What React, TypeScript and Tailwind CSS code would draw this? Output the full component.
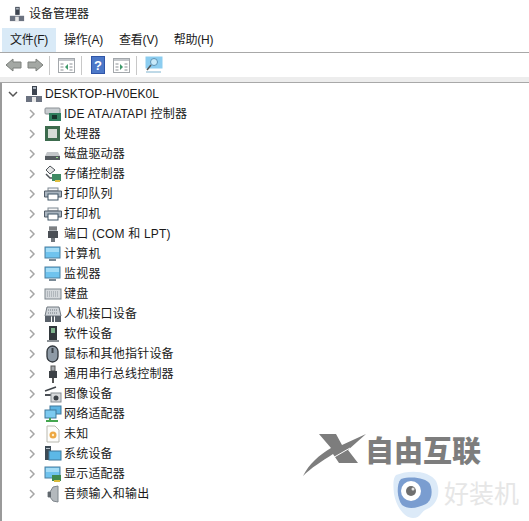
import React from 'react';

const font = { fontFamily: '"Liberation Sans", "Noto Sans CJK SC", sans-serif' };

function Chevron({ open }: { open?: boolean }) {
  return (
    <svg width="10" height="10" viewBox="0 0 10 10" className="shrink-0">
      <path d={open ? 'M1 3l4 4 4-4' : 'M3 1l4 4-4 4'} fill="none" stroke={open ? '#555' : '#a6a6a6'} strokeWidth="1.5" />
    </svg>
  );
}

function PcTree({ size = 18 }: { size?: number }) {
  return (
    <svg width={size} height={size} viewBox="0 0 18 18">
      <rect x="7" y="1" width="5" height="9" fill="#3d4450" />
      <rect x="8" y="2" width="3" height="2" fill="#a9b2bd" />
      <rect x="1" y="11" width="16" height="6" fill="#6b7280" />
      <rect x="7" y="12" width="4" height="5" fill="#e8e8e8" />
    </svg>
  );
}

function Screen({ stand = true }: { stand?: boolean }) {
  return (
    <>
      <rect x="1" y="2" width="15" height="11" fill="#6fc3ee" stroke="#4a7f9f" />
      <rect x="2" y="3" width="13" height="4" fill="#a4dcf6" />
      {stand && <path d="M5 15h7" stroke="#7a8a96" strokeWidth="2" />}
    </>
  );
}

function Printer() {
  return (
    <>
      <rect x="4" y="3" width="10" height="3" fill="#f6f6f6" stroke="#7d8791" />
      <path d="M0.5 6h17v6h-17z" fill="#a9b4bf" stroke="#4f5a66" />
      <rect x="4" y="9" width="10" height="6" fill="#fff" stroke="#3e5566" />
    </>
  );
}

const icons: Record<string, React.ReactNode> = {
  ide: (
    <>
      <rect x="1" y="3" width="15" height="6" rx="1" fill="#c8cdd0" stroke="#8a9094" />
      <rect x="5" y="8" width="12" height="8" fill="#2f7d5d" />
      <rect x="8" y="10" width="5" height="4" fill="#16332b" />
    </>
  ),
  cpu: (
    <>
      <rect x="1" y="1" width="15" height="15" fill="#3c6b4d" />
      <rect x="4" y="4" width="9" height="9" fill="#d5dcd6" />
    </>
  ),
  disk: (
    <>
      <path d="M3 7h11l2 4v4H1v-4z" fill="#c3c6c9" />
      <rect x="1" y="11" width="15" height="4" fill="#555b60" />
      <rect x="12" y="12" width="2" height="1" fill="#9adf8f" />
    </>
  ),
  storage: (
    <>
      <path d="M6 1l5 4-5 4-4-4z" fill="#e8e8e8" stroke="#4d5358" />
      <path d="M2 9l4 4h6" fill="none" stroke="#4d5358" strokeWidth="1.5" />
      <rect x="8" y="9" width="9" height="7" fill="#3f8a63" />
      <rect x="11" y="15" width="5" height="2" fill="#e0c040" />
    </>
  ),
  printer: <Printer />,
  port: (
    <>
      <rect x="5" y="1" width="8" height="5" fill="#a7acb1" />
      <path d="M6 2v3M8 2v3M10 2v3M12 2v3" stroke="#555" />
      <rect x="4" y="6" width="10" height="7" fill="#4a4f55" />
      <rect x="7" y="13" width="4" height="4" fill="#6f757b" />
    </>
  ),
  screen: <Screen />,
  keyboard: (
    <>
      <rect x="1" y="4" width="16" height="10" fill="#d4d8dc" stroke="#7d858c" />
      <path d="M3 7h12M3 9h12M3 11h12" stroke="#8e969d" strokeDasharray="1 1" />
    </>
  ),
  hid: (
    <>
      <path d="M3 2h12l2 9H1z" fill="#cfd4d9" stroke="#727a82" />
      <path d="M4 5h10M4 8h10" stroke="#727a82" strokeDasharray="1 1" />
      <rect x="1" y="11" width="6" height="6" fill="#59616a" />
      <rect x="11" y="11" width="6" height="6" fill="#59616a" />
      <rect x="8" y="11" width="2" height="6" fill="#59616a" />
    </>
  ),
  software: (
    <>
      <rect x="5" y="1" width="8" height="14" fill="#32383c" />
      <rect x="7" y="3" width="4" height="5" fill="#7fb38d" />
      <rect x="3" y="15" width="12" height="2" fill="#8b9196" />
    </>
  ),
  mouse: (
    <>
      <rect x="3" y="1" width="11" height="16" rx="5.5" fill="#8e9aa6" stroke="#30363c" strokeWidth="1.3" />
      <rect x="7.5" y="3" width="2" height="5" fill="#3d444b" />
    </>
  ),
  usb: (
    <>
      <rect x="7" y="1" width="4" height="5" fill="#a5a9ad" stroke="#555" />
      <rect x="5" y="6" width="8" height="7" fill="#3d4146" />
      <rect x="8" y="13" width="2" height="5" fill="#555" />
    </>
  ),
  camera: (
    <>
      <path d="M1 6l11-4" stroke="#3e4348" strokeWidth="1.5" />
      <rect x="1" y="9" width="6" height="2" fill="#4a4f55" />
      <rect x="7" y="8" width="10" height="9" fill="#d7d9db" stroke="#8a8f94" />
      <circle cx="12" cy="13" r="2.5" fill="#3e4348" />
    </>
  ),
  network: (
    <>
      <rect x="6" y="1" width="11" height="8" fill="#5fb5e3" stroke="#3f789b" />
      <rect x="1" y="5" width="11" height="8" fill="#7ccaf0" stroke="#3f789b" />
      <path d="M6 13v3M2 16h12" stroke="#44a64f" strokeWidth="2" />
    </>
  ),
  unknown: (
    <>
      <path d="M3 1h8l4 4v12H3z" fill="#fdfdfb" stroke="#b9b9b0" />
      <circle cx="9" cy="10" r="3.5" fill="#eda843" />
      <circle cx="9" cy="10" r="1.2" fill="#fff0cc" />
    </>
  ),
  system: (
    <>
      <rect x="1" y="1" width="6" height="14" fill="#3d4a55" />
      <rect x="2" y="3" width="4" height="1" fill="#b8c4cc" />
      <rect x="5" y="6" width="12" height="9" fill="#5cb8e6" stroke="#3f789b" />
    </>
  ),
  display: (
    <>
      <Screen stand={false} />
      <rect x="8" y="10" width="9" height="6" fill="#3f8a4f" />
      <rect x="10" y="15" width="6" height="2" fill="#d8bb3a" />
    </>
  ),
  audio: (
    <>
      <path d="M9 2l5-1v16l-5-1-3-4H4V7h2z" fill="#b4b9bd" stroke="#7f868c" />
      <rect x="4" y="7" width="3" height="5" fill="#60676d" />
    </>
  ),
};

const rows: [string, string][] = [
  ['ide', 'IDE ATA/ATAPI 控制器'],
  ['cpu', '处理器'],
  ['disk', '磁盘驱动器'],
  ['storage', '存储控制器'],
  ['printer', '打印队列'],
  ['printer', '打印机'],
  ['port', '端口 (COM 和 LPT)'],
  ['screen', '计算机'],
  ['screen', '监视器'],
  ['keyboard', '键盘'],
  ['hid', '人机接口设备'],
  ['software', '软件设备'],
  ['mouse', '鼠标和其他指针设备'],
  ['usb', '通用串行总线控制器'],
  ['camera', '图像设备'],
  ['network', '网络适配器'],
  ['unknown', '未知'],
  ['system', '系统设备'],
  ['display', '显示适配器'],
  ['audio', '音频输入和输出'],
];

const menus = ['文件(F)', '操作(A)', '查看(V)', '帮助(H)'];

function Arrow({ flip }: { flip?: boolean }) {
  return (
    <svg width="17" height="16" viewBox="0 0 17 16" className={flip ? 'scale-x-[-1]' : ''}>
      <path d="M1 8l7-6v3h8v6H8v3z" fill="#a4a8a4" stroke="#7c807c" />
    </svg>
  );
}

function PaneIcon({ right }: { right?: boolean }) {
  return (
    <svg width="17" height="15" viewBox="0 0 17 15">
      <rect x="0.5" y="0.5" width="16" height="14" fill="#fff" stroke="#a4a8ac" />
      <rect x="1" y="1" width="15" height="2" fill="#c4c8cc" />
      <path d="M2.5 6h3M2.5 9h3M2.5 12h3M11.5 6h3M11.5 9h3M11.5 12h3" stroke="#8a8f94" />
      <path d={right ? 'M7 6l3 3-3 3z' : 'M10 6L7 9l3 3z'} fill="#3f9a6b" />
    </svg>
  );
}

function Sep() {
  return <div className="w-px h-[19px] bg-[#c8c8c8]" />;
}

export default function App() {
  return (
    <div className="relative w-[529px] h-[521px] overflow-hidden bg-white text-[#1a1a1a]" style={font}>
      <div className="h-[28px] flex items-center gap-[4px] pl-[9px] text-[12px]">
        <PcTree size={16} />
        <span>设备管理器</span>
      </div>

      <div className="h-[25px] flex items-center border-b border-[#a8a8a8] text-[12px]">
        <div className="h-[24px] w-[54px] flex items-center justify-center bg-[#d9eaf7] ml-[2px]">
          <span className="tracking-[-0.3px]">{menus[0]}</span>
        </div>
        {menus.slice(1).map((m) => (
          <div key={m} className="h-[24px] w-[55px] flex items-center justify-center">
            <span className="tracking-[-0.2px]">{m}</span>
          </div>
        ))}
      </div>

      <div className="h-[24px] flex items-center pl-[5px] gap-[5px]">
        <Arrow />
        <Arrow flip />
        <Sep />
        <div className="ml-[3px] flex"><PaneIcon /></div>
        <div className="ml-[1px]"><Sep /></div>
        <svg width="14" height="18" viewBox="0 0 14 18" className="ml-[4px]">
          <rect width="14" height="18" fill="#2f55a8" />
          <rect x="1" y="1" width="12" height="16" fill="#4c78c8" />
          <text x="7" y="14" textAnchor="middle" fontSize="13" fontWeight="700" fill="#fff" fontFamily="Liberation Sans">?</text>
        </svg>
        <div className="ml-[3px] flex"><PaneIcon right /></div>
        <div className="ml-[1px]"><Sep /></div>
        <svg width="18" height="18" viewBox="0 0 18 18" className="ml-[3px]">
          <rect x="1" y="1" width="16" height="11" fill="#8ccdf0" stroke="#8ccdf0" />
          <circle cx="9" cy="6" r="3.5" fill="#c8eafa" stroke="#5d93b5" />
          <path d="M6 9l-4 5" stroke="#555" strokeWidth="1.5" />
          <path d="M1 16h15" stroke="#7eb3cf" />
        </svg>
      </div>

      <div className="h-[6px] bg-[#ededed] border-b border-[#a8a8a8]" />

      <div className="h-[441px] border-l-2 border-[#9a9a9a] pt-[1px] text-[12px]">
        <div className="h-[20px] flex items-center pl-[6px]">
          <Chevron open />
          <div className="ml-[7px] flex"><PcTree /></div>
          <span className="ml-[2px]">DESKTOP-HV0EK0L</span>
        </div>
        {rows.map(([icon, label], i) => (
          <div key={i} className="h-[20px] flex items-center pl-[25px]">
            <Chevron />
            <svg width="18" height="18" viewBox="0 0 18 18" className="ml-[7px] shrink-0">
              {icons[icon]}
            </svg>
            <span className="ml-[2px] tracking-[0.2px]">{label}</span>
          </div>
        ))}
      </div>

      {/* watermark */}
      <div className="absolute left-[302px] top-[433px] pointer-events-none">
        <svg width="66" height="44" viewBox="0 0 66 44">
          <path d="M17 1H34L40 12 64 1 46 17 56 30H37L31 21C20 28 9 35 1 43 7 31 17 22 29 15z" fill="#7d7d7d" />
          <path d="M15 34L48 15" stroke="#fff" strokeWidth="1" />
        </svg>
      </div>
      <span className="absolute left-[365px] top-[434px] text-[29px] leading-[36px] font-black text-[#7d7d7d] whitespace-nowrap pointer-events-none">
        自由互联
      </span>
      <div className="absolute left-[392px] top-[471px] flex items-center pointer-events-none">
        <svg width="52" height="48" viewBox="0 0 52 48">
          <path d="M4 4C18-2 38 0 44 10c5 10 2 24-9 28-6 2-6 9-14 9-9 0-17-12-19-24C1 14 1 7 4 4z" fill="#dceaf8" />
          <path d="M9 8C20 5 34 7 38 13c3 7 2 16-4 20-8 4-18 6-24 1C5 28 4 13 9 8z" fill="#7a9dd0" />
          <circle cx="19" cy="20" r="10" fill="#fff" />
          <circle cx="19" cy="20" r="5" fill="#6f6f6f" />
          <circle cx="21" cy="18" r="1.5" fill="#e5e5e5" />
        </svg>
        <span className="text-[25px] font-normal text-[#e6e6e6] whitespace-nowrap">好装机</span>
      </div>
    </div>
  );
}
